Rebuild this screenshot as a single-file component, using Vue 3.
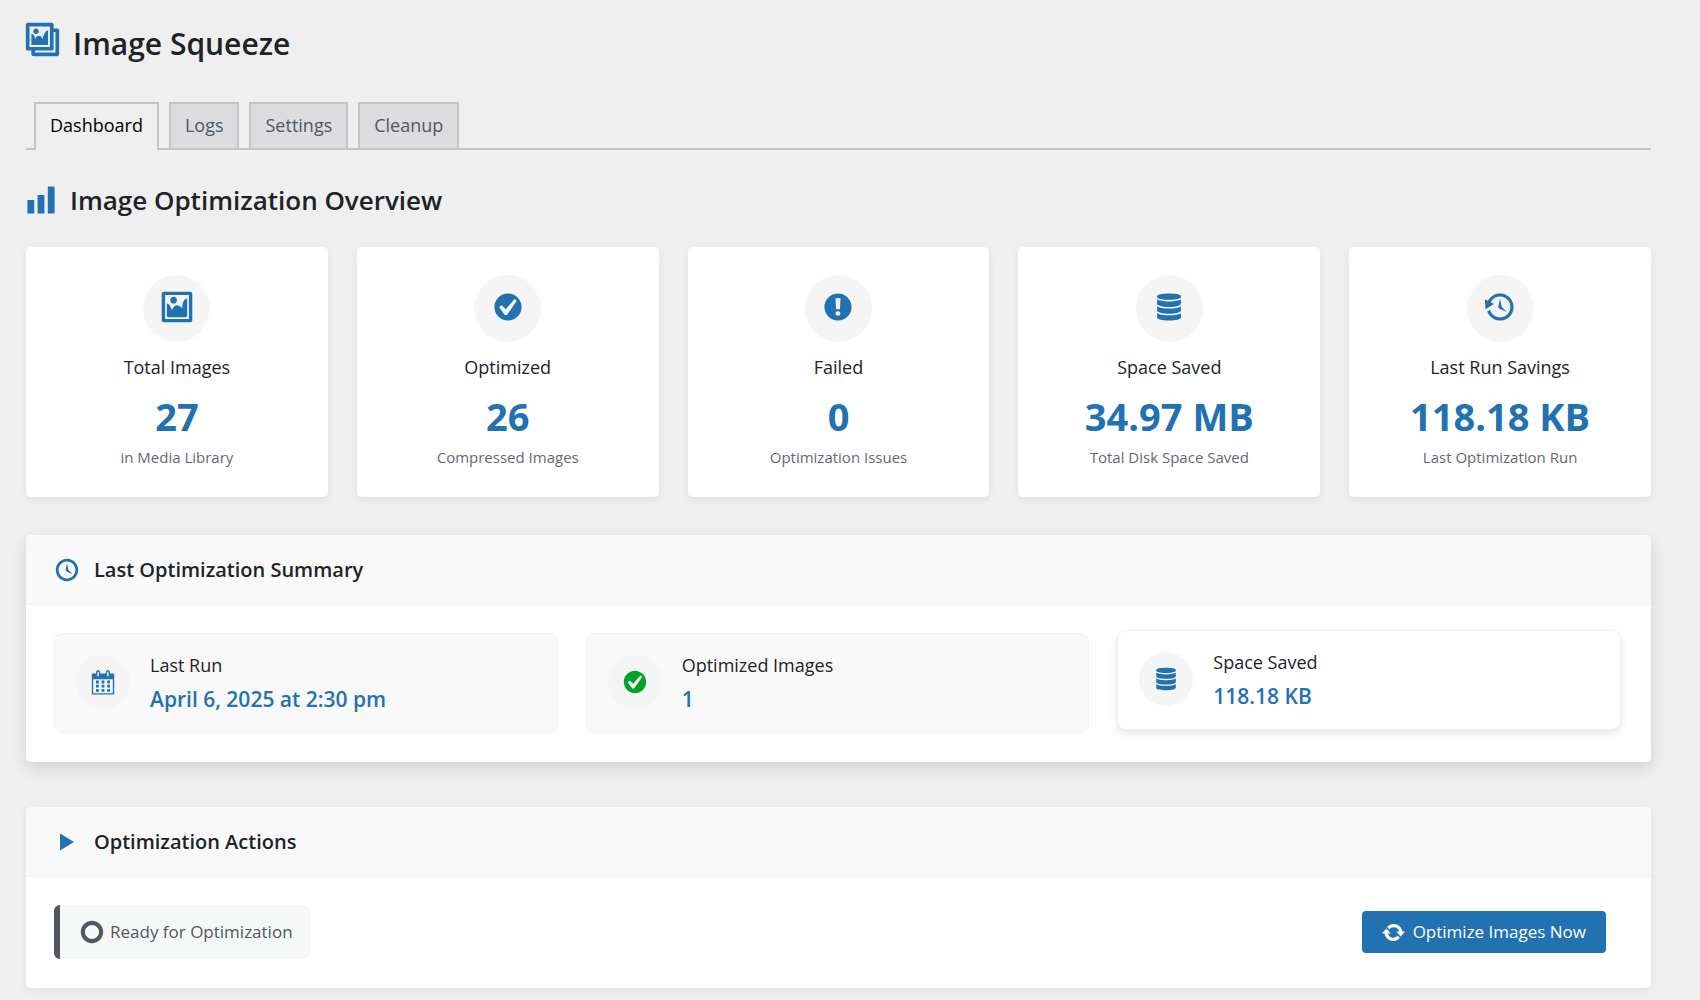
<script setup>
import { ref } from 'vue'

const icons = {
  gallery: 'M16 4h1.96c.57 0 1.04.47 1.04 1.04v12.92c0 .57-.47 1.04-1.04 1.04H5.04C4.47 19 4 18.53 4 17.96V16H2.04C1.47 16 1 15.53 1 14.96V2.04C1 1.47 1.47 1 2.04 1h12.92c.57 0 1.04.47 1.04 1.04V4zM3 14h11V3H3v11zm5-8.5C8 4.67 7.33 4 6.5 4S5 4.67 5 5.5 5.67 7 6.5 7 8 6.33 8 5.5zm2 4.5s1-5 3-5v8H4V7c2 0 2 3 2 3s.33-2 2-2 2 2 2 2zm7 7V6h-1v8.960c0 .57-.47 1.040-1.040 1.040H6v1h11z',
  chart: 'M18 18V2h-4v16h4zm-6 0V7H8v11h4zm-6 0v-8H2v8h4z',
  image: 'M2.25 1h15.5c.69 0 1.25.56 1.25 1.25v15.5c0 .69-.56 1.25-1.25 1.25H2.25C1.56 19 1 18.44 1 17.75V2.25C1 1.56 1.56 1 2.25 1zM17 17V3H3v14h14zM10 6c0-1.1-.9-2-2-2s-2 .9-2 2 .9 2 2 2 2-.9 2-2zm3 5s0-6 3-6v10c0 .55-.45 1-1 1H5c-.55 0-1-.45-1-1V8c2 0 3 4 3 4s1-3 3-3 3 2 3 2z',
  yes: 'M10 2c-4.42 0-8 3.58-8 8s3.58 8 8 8 8-3.58 8-8-3.58-8-8-8zm-.615 12.66h-1.34l-3.24-4.54 1.341-1.25 2.569 2.4 5.141-5.931 1.34.94-5.811 8.381z',
  warning: 'M10 2c4.42 0 8 3.58 8 8s-3.58 8-8 8-8-3.58-8-8 3.58-8 8-8zm1.13 9.38l.35-6.46H8.52l.35 6.46h2.26zm-.09 3.36c.24-.23.37-.55.37-.96 0-.42-.12-.74-.36-.97s-.59-.35-1.06-.35-.82.12-1.07.35-.37.55-.37.97c0 .41.13.73.38.96.26.23.61.34 1.06.34s.8-.11 1.05-.34z',
  database: 'M10 5.8c3.4 0 5.6-.5 7-1.3V3.6C17 2.5 13.6 2 10 2S3 2.5 3 3.6v.9c1.4.8 3.6 1.3 7 1.3zM10 10c4 0 7-.8 7-1.900V5.400c-1 .8-4 1.300-7 1.300s-6-.5-7-1.300v2.700C3 9.200 6 10 10 10zM10 14c4 0 7-.8 7-1.900V9.500c-1 .9-4 1.400-7 1.400s-6-.5-7-1.400v2.600C3 13.200 6 14 10 14zM10 18c4 0 7-.7 7-1.800v-2.700c-1 .9-4 1.400-7 1.400s-6-.5-7-1.400v2.700C3 17.300 6 18 10 18z',
  backup: 'M13.65 2.88c3.93 2.01 5.48 6.84 3.47 10.77s-6.83 5.48-10.77 3.47c-1.87-.96-3.2-2.56-3.86-4.4l1.64-1.03c.45 1.57 1.52 2.95 3.08 3.76 3.01 1.54 6.69.35 8.23-2.66 1.55-3.01.36-6.69-2.65-8.24C9.78 3.01 6.1 4.2 4.56 7.21l1.88.97-4.95 3.08-.39-5.82 1.78.91C4.9 2.4 9.75.89 13.65 2.88zm-4.36 7.83C9.11 10.53 9 10.28 9 10c0-.07.03-.12.04-.19h-.01L10 5l.97 4.81L14 13l-4.5-2.12.02-.02c-.08-.04-.16-.09-.23-.15z',
  clock: 'M10 2c4.42 0 8 3.58 8 8s-3.58 8-8 8-8-3.58-8-8 3.58-8 8-8zm0 14c3.31 0 6-2.69 6-6s-2.69-6-6-6-6 2.69-6 6 2.69 6 6 6zm-.71-5.29c.07.05.14.1.23.15l-.02.02L14 13l-3.03-3.19L10 5l-.97 4.81h.01c0 .02-.01.05-.02.09S9 9.97 9 10c0 .28.1.52.29.71z',
  calendar: 'M15 4h3v15H2V4h3V3c0-.41.15-.76.44-1.06.29-.29.65-.44 1.06-.44s.77.15 1.06.44c.29.3.44.65.44 1.06v1h4V3c0-.41.15-.76.44-1.06.29-.29.65-.44 1.06-.44s.77.15 1.06.44c.29.3.44.65.44 1.06v1zM6 3v2.5c0 .14.05.26.15.36.09.09.21.14.35.14s.26-.05.35-.14c.1-.1.15-.22.15-.36V3c0-.14-.05-.26-.15-.35-.09-.1-.21-.15-.35-.15s-.26.05-.35.15c-.1.09-.15.21-.15.35zm7 0v2.5c0 .14.05.26.14.36.1.09.22.14.36.14s.26-.05.36-.14c.09-.1.14-.22.14-.36V3c0-.14-.05-.26-.14-.35-.1-.1-.22-.15-.36-.15s-.26.05-.36.15c-.09.09-.14.21-.14.35zm4 15V8H3v10h14zM7 9v2H5V9h2zm2 0h2v2H9V9zm4 2V9h2v2h-2zm-6 1v2H5v-2h2zm2 0h2v2H9v-2zm4 2v-2h2v2h-2zm-6 1v2H5v-2h2zm4 2H9v-2h2v2zm4 0h-2v-2h2v2z',
  play: 'M5 4l10 6-10 6V4z',
  marker: 'M10 2c4.42 0 8 3.58 8 8s-3.58 8-8 8-8-3.58-8-8 3.58-8 8-8zm0 13c2.76 0 5-2.24 5-5s-2.24-5-5-5-5 2.24-5 5 2.24 5 5 5z',
  update: 'M10.2 3.28c3.53 0 6.43 2.61 6.92 6h2.08l-3.5 4-3.5-4h2.32c-.45-1.97-2.21-3.45-4.32-3.45-1.45 0-2.73.71-3.54 1.78L4.95 5.66C6.23 4.2 8.11 3.28 10.2 3.28zm-.4 13.44c-3.52 0-6.43-2.61-6.92-6H.8l3.5-4c1.17 1.33 2.33 2.67 3.5 4H5.48c.45 1.97 2.21 3.45 4.32 3.45 1.45 0 2.73-.71 3.54-1.78l1.71 1.95c-1.28 1.46-3.15 2.38-5.25 2.38z'
}

const tabs = ['Dashboard', 'Logs', 'Settings', 'Cleanup']
const activeTab = ref('Dashboard')

const stats = [
  { icon: 'image', label: 'Total Images', value: '27', note: 'in Media Library' },
  { icon: 'yes', label: 'Optimized', value: '26', note: 'Compressed Images' },
  { icon: 'warning', label: 'Failed', value: '0', note: 'Optimization Issues' },
  { icon: 'database', label: 'Space Saved', value: '34.97 MB', note: 'Total Disk Space Saved' },
  { icon: 'backup', label: 'Last Run Savings', value: '118.18 KB', note: 'Last Optimization Run' }
]

const summary = [
  { icon: 'calendar', label: 'Last Run', value: 'April 6, 2025 at 2:30 pm' },
  { icon: 'yes', label: 'Optimized Images', value: '1', success: true },
  { icon: 'database', label: 'Space Saved', value: '118.18 KB', raised: true }
]
</script>

<template>
  <main class="page">
    <h1 class="title">
      <svg class="icon icon-xl" viewBox="0 0 20 20" aria-hidden="true"><path :d="icons.gallery" /></svg>
      <span>Image Squeeze</span>
    </h1>

    <nav class="tabs">
      <a
        v-for="tab in tabs"
        :key="tab"
        href="#"
        class="tab"
        :class="{ active: tab === activeTab }"
        @click.prevent="activeTab = tab"
      >{{ tab }}</a>
    </nav>

    <h2 class="section-title">
      <svg class="icon icon-lg" viewBox="0 0 20 20" aria-hidden="true"><path :d="icons.chart" /></svg>
      <span>Image Optimization Overview</span>
    </h2>

    <section class="stats">
      <article v-for="stat in stats" :key="stat.label" class="stat">
        <div class="stat-icon">
          <svg class="icon icon-lg" viewBox="0 0 20 20" aria-hidden="true"><path :d="icons[stat.icon]" /></svg>
        </div>
        <h3 class="stat-label">{{ stat.label }}</h3>
        <div class="stat-value">{{ stat.value }}</div>
        <div class="stat-note">{{ stat.note }}</div>
      </article>
    </section>

    <section class="panel panel-raised">
      <header class="panel-head">
        <svg class="icon" viewBox="0 0 20 20" aria-hidden="true"><path :d="icons.clock" /></svg>
        <h3>Last Optimization Summary</h3>
      </header>
      <div class="summary">
        <div v-for="item in summary" :key="item.label" class="item" :class="{ raised: item.raised }">
          <div class="item-icon" :class="{ success: item.success }">
            <svg class="icon" viewBox="0 0 20 20" aria-hidden="true"><path :d="icons[item.icon]" /></svg>
          </div>
          <div>
            <div class="item-label">{{ item.label }}</div>
            <div class="item-value">{{ item.value }}</div>
          </div>
        </div>
      </div>
    </section>

    <section class="panel">
      <header class="panel-head">
        <svg class="icon" viewBox="0 0 20 20" aria-hidden="true"><path :d="icons.play" /></svg>
        <h3>Optimization Actions</h3>
      </header>
      <div class="actions">
        <div class="status">
          <svg class="icon" viewBox="0 0 20 20" aria-hidden="true"><path :d="icons.marker" /></svg>
          <span>Ready for Optimization</span>
        </div>
        <button type="button" class="primary">
          <svg class="icon icon-sm" viewBox="0 0 20 20" aria-hidden="true"><path :d="icons.update" /></svg>
          <span>Optimize Images Now</span>
        </button>
      </div>
    </section>
  </main>
</template>

<style>
body {
  background: #efefef;
}
</style>

<style scoped>
.page {
  padding: 21px 49px 12px 26px;
  color: #1d2327;
  font-family: "Open Sans", "Noto Sans", sans-serif;
  font-size: 16px;
}

.icon {
  display: block;
  flex: none;
  width: 28px;
  height: 28px;
  fill: currentColor;
  color: inherit;
}

.icon-sm {
  width: 25px;
  height: 25px;
}

.icon-lg {
  width: 34px;
  height: 34px;
}

.icon-xl {
  width: 37px;
  height: 37px;
}

.title,
.section-title,
.panel-head h3,
.stat-label {
  margin: 0;
}

.title {
  display: flex;
  align-items: flex-start;
  gap: 12px;
  margin-left: -2px;
  font-size: 30px;
  font-weight: 600;
  line-height: 46px;
}

.title .icon,
.section-title .icon,
.panel-head .icon {
  color: #2271b1;
}

.tabs {
  display: flex;
  gap: 10px;
  margin-top: 35px;
  padding-left: 8px;
  border-bottom: 2px solid #c3c4c7;
}

.tab {
  padding: 5px 14px 7px;
  border: 2px solid #c3c4c7;
  border-bottom: 0;
  background: #dcdcde;
  color: #50575e;
  font-size: 18px;
  font-weight: 500;
  line-height: 32px;
  text-decoration: none;
}

.tab.active {
  margin-bottom: -2px;
  padding-bottom: 9px;
  background: #efefef;
  color: #000;
}

.section-title {
  display: flex;
  align-items: center;
  gap: 12px;
  margin-top: 30px;
  margin-left: -2px;
  font-size: 26px;
  font-weight: 600;
  line-height: 40px;
}

.stats {
  display: grid;
  grid-template-columns: repeat(5, 1fr);
  gap: 29px;
  margin-top: 27px;
}

.stat {
  padding: 28px 14px;
  border-radius: 5px;
  background: #fff;
  box-shadow: 0 3px 8px rgba(0, 0, 0, 0.06);
  text-align: center;
}

.stat-icon {
  display: flex;
  justify-content: center;
  width: 67px;
  height: 67px;
  margin: 0 auto;
  padding-top: 15px;
  box-sizing: border-box;
  border-radius: 50%;
  background: #f5f5f5;
  color: #2271b1;
}

.stat-label {
  margin-top: 10px;
  font-size: 18px;
  font-weight: 500;
  line-height: 30px;
}

.stat-value {
  margin-top: 10px;
  color: #2271b1;
  font-size: 38px;
  font-weight: 700;
  line-height: 48px;
}

.stat-note {
  margin-top: 5px;
  color: #646970;
  font-size: 15px;
  line-height: 24px;
}

.panel {
  margin-top: 45px;
  border-radius: 5px;
  background: #fff;
  box-shadow: 0 3px 8px rgba(0, 0, 0, 0.06);
}

.panel-raised {
  margin-top: 38px;
  box-shadow: 0 6px 16px rgba(0, 0, 0, 0.12);
}

.panel-head {
  display: flex;
  align-items: center;
  gap: 13px;
  padding: 17px 27px 16px;
  border-bottom: 1px solid #f0f0f1;
  border-radius: 5px 5px 0 0;
  background: #f9f9f9;
}

.panel-head h3 {
  font-size: 20px;
  font-weight: 600;
  line-height: 36px;
}

.summary {
  display: grid;
  grid-template-columns: repeat(3, 1fr);
  gap: 28px;
  padding: 28px 30px 29px 28px;
}

.item {
  display: flex;
  align-items: center;
  gap: 20px;
  padding: 14px 21px 16px;
  border: 1px solid #f0f0f1;
  border-radius: 9px;
  background: #f9f9f9;
}

.item.raised {
  background: #fff;
  box-shadow: 0 4px 8px rgba(0, 0, 0, 0.1);
  transform: translateY(-3px);
}

.item-icon {
  display: flex;
  align-items: center;
  justify-content: center;
  width: 54px;
  height: 54px;
  border-radius: 50%;
  background: #f5f5f5;
  color: #2271b1;
}

.item-icon.success {
  color: #00a32a;
}

.item-label {
  font-size: 18px;
  font-weight: 500;
  line-height: 34px;
}

.item-value {
  color: #2271b1;
  font-size: 21px;
  font-weight: 600;
  line-height: 34px;
}

.actions {
  display: flex;
  align-items: center;
  justify-content: space-between;
  padding: 28px 45px 29px 28px;
}

.status {
  display: flex;
  align-items: center;
  gap: 4px;
  padding: 13px 17px 13px 18px;
  border-left: 6px solid #50575e;
  border-radius: 6px;
  background: #f6f7f7;
  color: #50575e;
  font-size: 17px;
  line-height: 28px;
}

.primary {
  display: flex;
  align-items: center;
  gap: 7px;
  padding: 4px 20px 4px 19px;
  border: 0;
  border-radius: 4px;
  background: #2271b1;
  color: #fff;
  font-family: inherit;
  font-size: 17px;
  line-height: 34px;
  cursor: pointer;
}
</style>
